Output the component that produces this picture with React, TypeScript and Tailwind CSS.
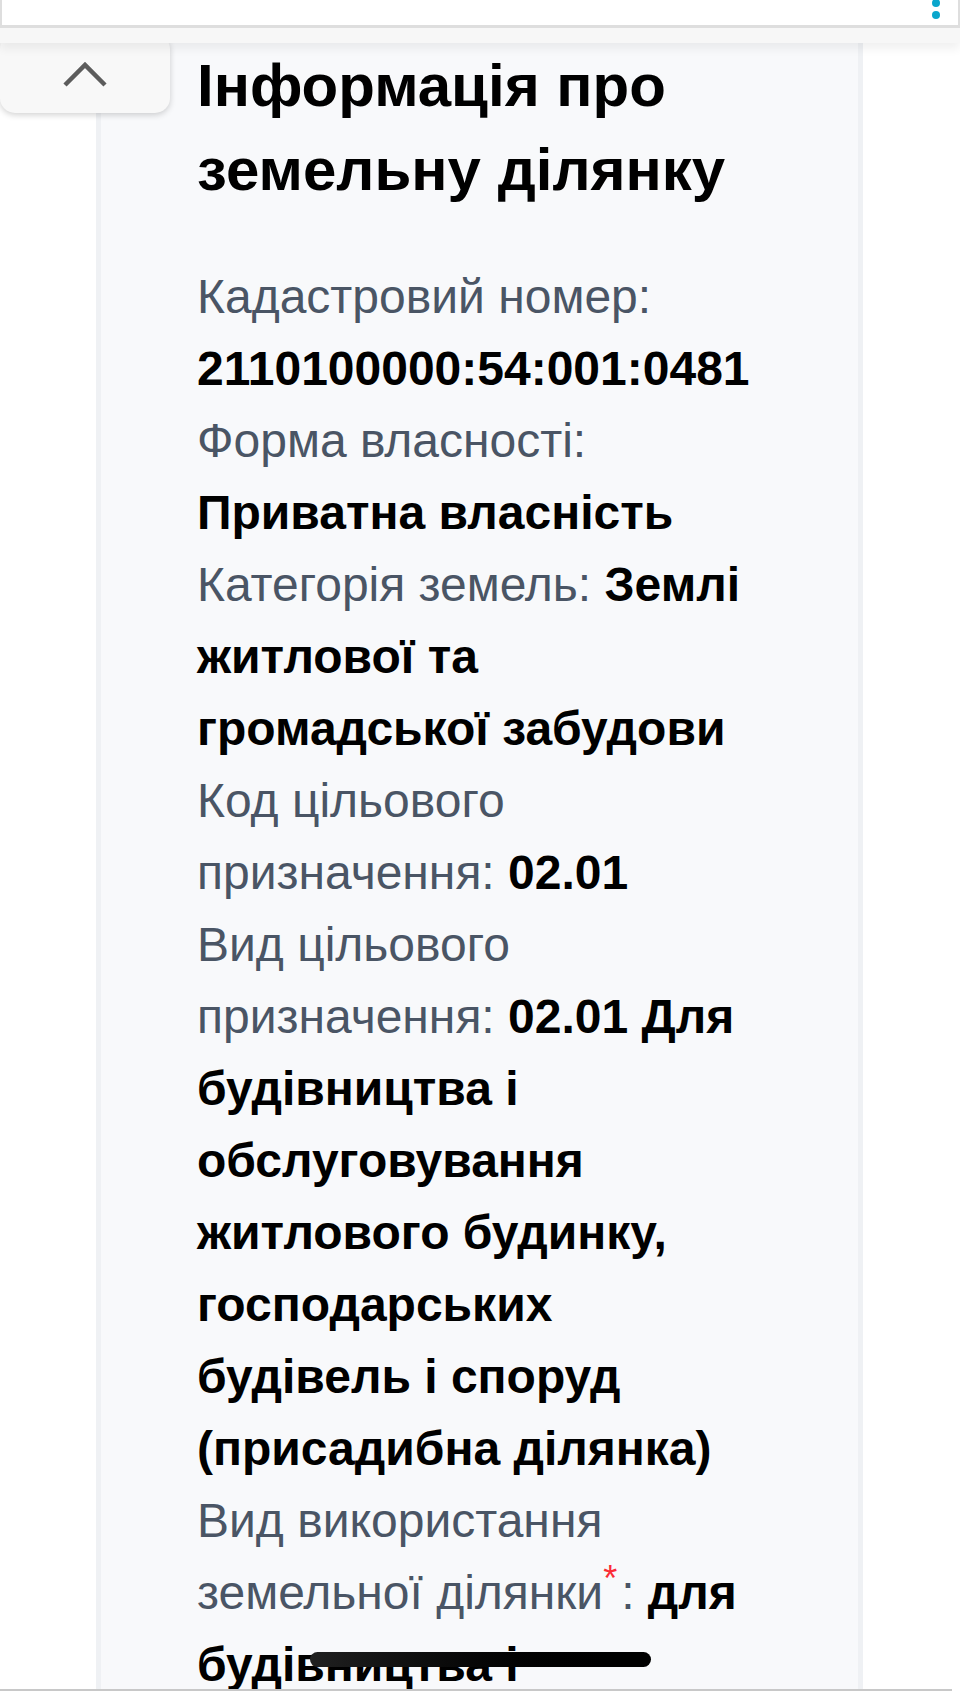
import React from "react";

const items: { label: React.ReactNode; value: string }[] = [
  { label: "Кадастровий номер:", value: "2110100000:54:001:0481" },
  { label: "Форма власності:", value: "Приватна власність" },
  { label: "Категорія земель:", value: "Землі житлової та громадської забудови" },
  { label: "Код цільового призначення:", value: "02.01" },
  {
    label: "Вид цільового призначення:",
    value:
      "02.01 Для будівництва і обслуговування житлового будинку, господарських будівель і споруд (присадибна ділянка)",
  },
  {
    label: (
      <>
        Вид використання земельної ділянки<sup className="text-red-500">*</sup>
        <span className="ml-[4px]">:</span>
      </>
    ),
    value:
      "для будівництва і обслуговування житлового будинку, господарських будівель і споруд (присадибна ділянка)",
  },
];

export default function App() {
  return (
    <div className="relative h-[1691px] w-[960px] overflow-hidden bg-white font-['Liberation_Sans',Arial,sans-serif]">
      {/* page card */}
      <div className="ml-[96px] mt-[43px] min-h-[1700px] w-[767px] border-x-[5px] border-[#eff1f4] bg-[#f8f9fb] pl-[96px] pr-[90px] pt-px">
        <h1 className="text-[60px] font-bold leading-[84px] text-black">
          Інформація про земельну ділянку
        </h1>
        <div className="mt-[49px] text-[48px] leading-[72px]">
          {items.map((it, i) => (
            <p key={i}>
              <span className="text-gray-600">{it.label}</span>{" "}
              <span className="font-bold text-black">{it.value}</span>
            </p>
          ))}
        </div>
      </div>

      {/* collapse tab */}
      <div className="absolute left-0 top-[34px] z-10 flex h-[79px] w-[170px] items-center justify-center rounded-[15px] bg-[#f8f8f8] shadow-[0_2px_6px_rgba(0,0,0,0.18)]">
        <svg width="48" height="30" viewBox="0 0 48 30" className="mt-[2px]">
          <path d="M4 25 L24 5 L44 25" fill="none" stroke="#5c5c5c" strokeWidth="4.5" />
        </svg>
      </div>

      {/* header */}
      <div className="absolute left-0 top-0 z-20 w-full">
        <div className="relative h-[28px] w-full border-x-2 border-b-[3px] border-[#dedede] bg-white">
          <svg width="12" height="24" viewBox="0 0 12 24" className="absolute left-[928px] top-0">
            <circle cx="6" cy="3" r="4" fill="#0aa6cc" />
            <circle cx="6" cy="15" r="4" fill="#0aa6cc" />
          </svg>
        </div>
        <div className="h-[15px] w-full bg-[#f7f7f7] shadow-[0_6px_10px_rgba(0,0,0,0.06)]" />
      </div>

      {/* home indicator */}
      <div className="absolute left-[310px] top-[1652px] z-30 h-[15px] w-[341px] rounded-full bg-gradient-to-r from-[#202020] to-black" />

      {/* bottom line */}
      <div className="absolute bottom-0 left-0 z-30 h-[2px] w-[952px] bg-[#c8c8c8]" />
    </div>
  );
}
